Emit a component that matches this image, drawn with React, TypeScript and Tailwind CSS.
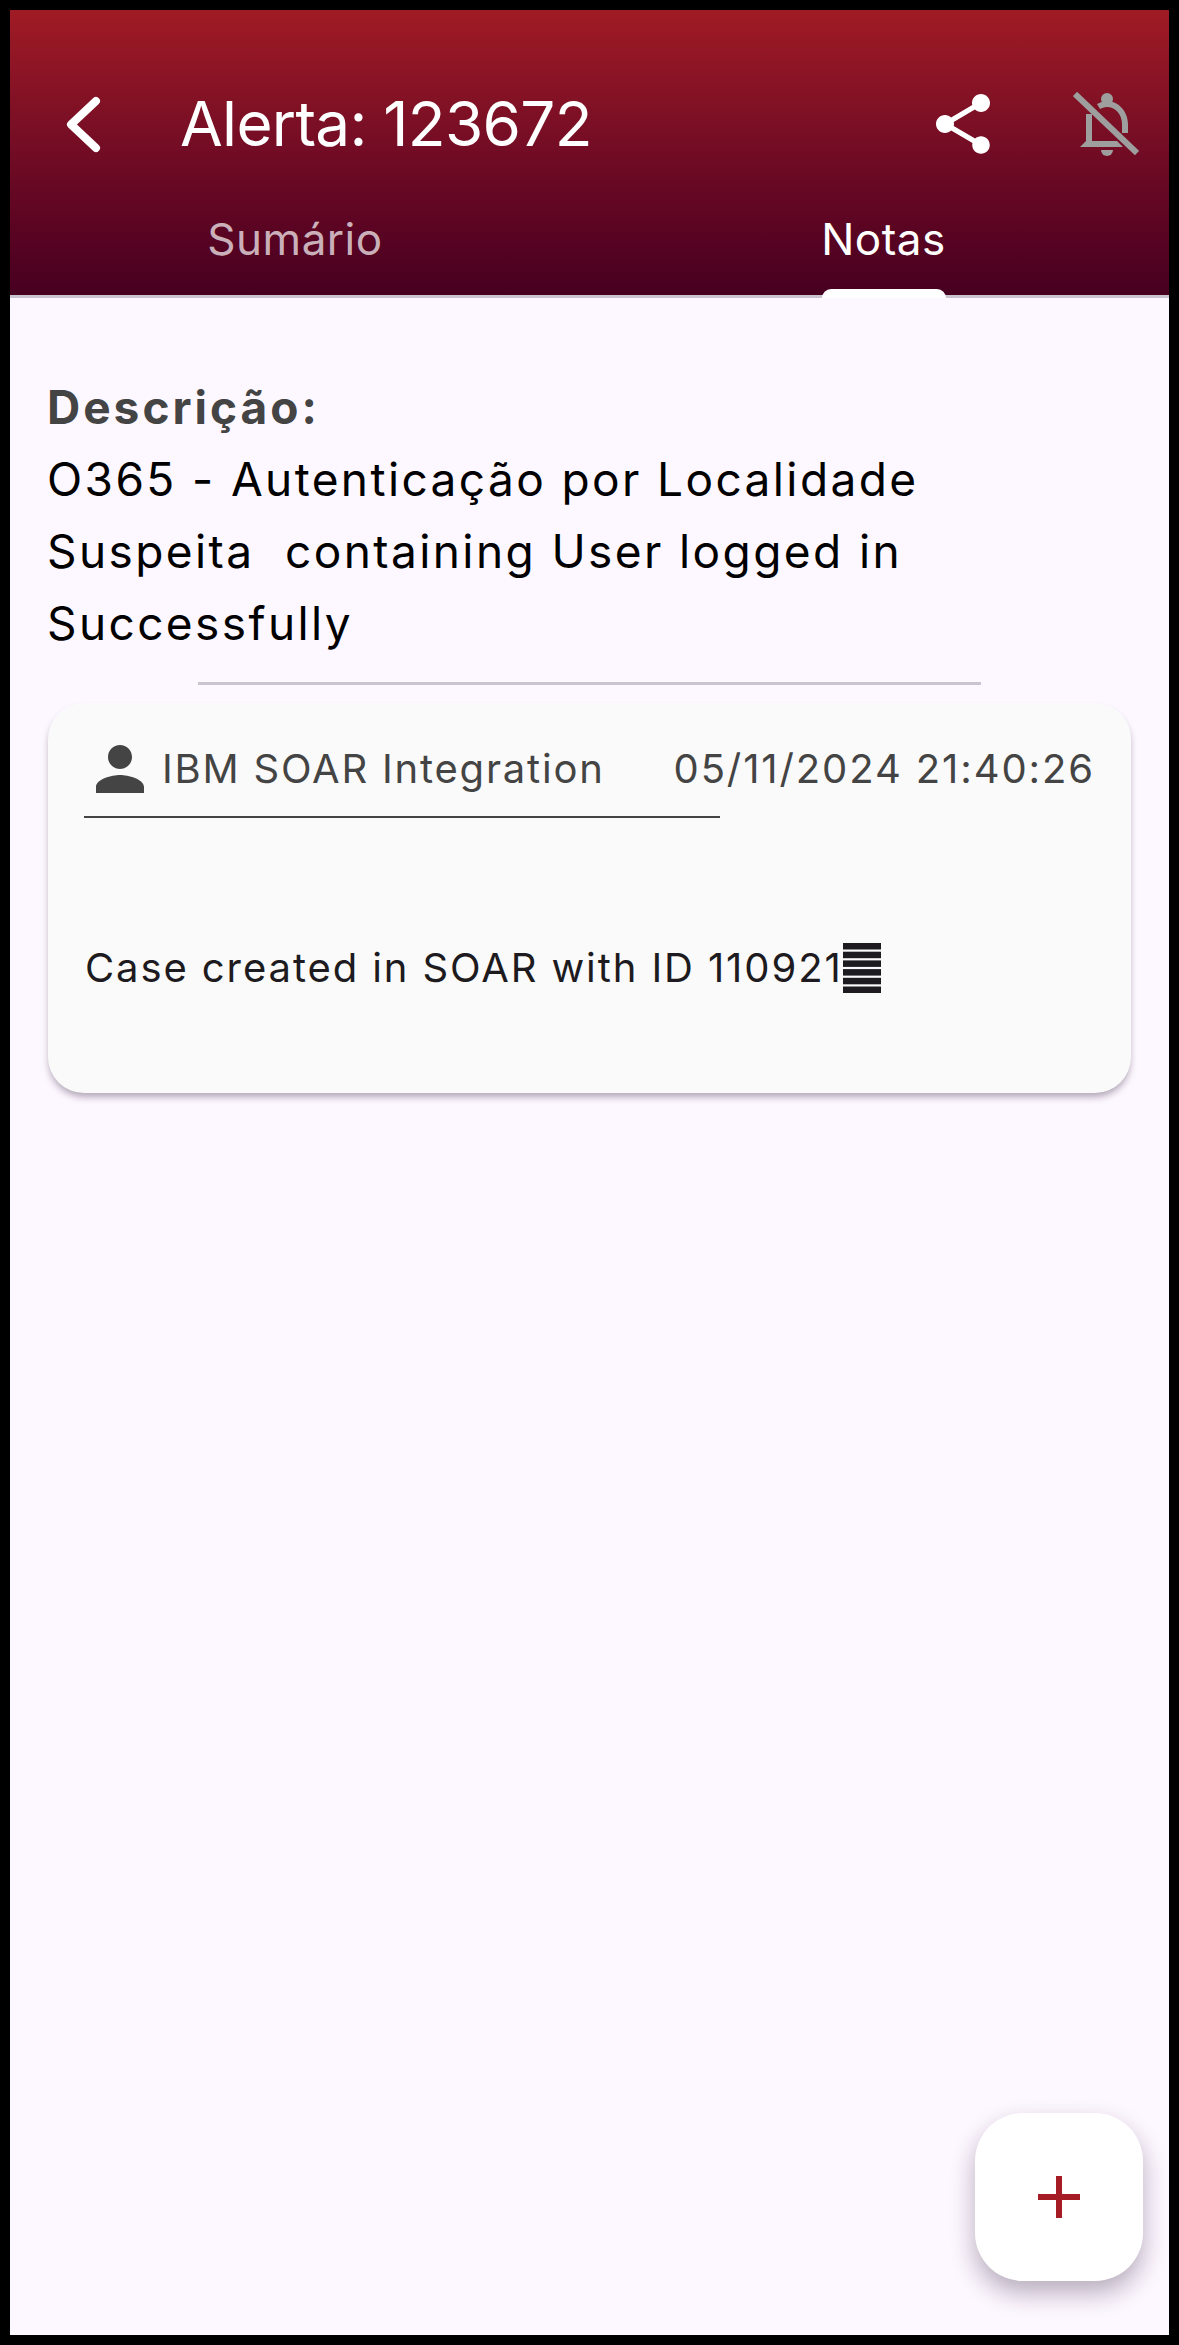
import React from "react";
import { MdShare, MdPerson } from "react-icons/md";

function App() {
    return (
        <div className="h-[2345px] w-[1179px] bg-black p-[10px] font-['Inter','Noto_Sans',sans-serif]">
            <div className="relative flex h-[2325px] w-[1159px] flex-col bg-[#fdf7ff]">
                <header className="flex h-[288px] flex-col border-b-[3px] border-[#cac4d0] bg-gradient-to-b from-[#a01b24] to-[#470020]">
                    <div className="mt-[78px] flex h-[72px] items-center">
                        <svg className="ml-[50px] h-[72px] w-[48px]" viewBox="0 0 48 72" fill="none">
                            <path d="M36 13 L11 36.5 L36 60" stroke="#fff" strokeWidth="8" strokeLinecap="round" strokeLinejoin="round" />
                        </svg>
                        <h1 className="ml-[72px] text-[62px] leading-none font-normal tracking-[-0.7px] text-white">Alerta: 123672</h1>
                        <MdShare className="ml-auto text-white" size={72} />
                        <svg className="mr-[30px] ml-[74px] h-[66px] w-[66px]" viewBox="0 0 66 66" fill="#9e9e9e">
                            <circle cx="34" cy="8" r="6" />
                            <path d="M24 13 C28 11 31 10 34 10 C45 10 55 20 55 33 V42 H49 V33 C49 23 42 16 34 16 C31 16 29 17 27 18 Z" />
                            <path d="M13 23 H19 V50 H13 Z" />
                            <path d="M7 56 L13 50 H44 L50 56 Z" />
                            <path d="M28 59 H40 A6 6 0 0 1 28 59 Z" />
                            <path d="M2 3 L64 62" fill="none" stroke="#9e9e9e" strokeWidth="6" />
                        </svg>
                    </div>
                    <div className="mt-[54px] grid grid-cols-[570px_589px] text-center text-[44px] leading-[50px] tracking-[0.5px]">
                        <div className="text-white/70">Sumário</div>
                        <div className="relative pl-[18px] text-white">
                            Notas
                            <span className="absolute top-[75px] left-[242px] h-[9px] w-[124px] rounded-t-[9px] bg-white" />
                        </div>
                    </div>
                </header>

                <section className="px-[37px] pt-[73px]">
                    <p className="text-[46px] leading-[72px] font-bold tracking-[3px] text-[#444444]">Descrição:</p>
                    <p className="text-[46px] leading-[72px] tracking-[2.4px] whitespace-pre text-black">
                        {"O365 - Autenticação por Localidade\nSuspeita  containing User logged in\nSuccessfully"}
                    </p>
                </section>

                <div className="mx-auto mt-[23px] h-[3px] w-[783px] bg-[#cac4d0]" />

                <div className="mx-[38px] mt-[18px] h-[390px] w-[1083px] rounded-[36px] bg-[#fafafa] shadow-[0_5px_7px_-1px_rgba(40,20,50,0.35)]">
                    <div className="flex h-[114px] items-start">
                        <div className="mt-[30px] mr-[-50px] ml-[36px] h-[85px] w-[636px] shrink-0 border-b-2 border-[#444444]">
                            <div className="flex items-center text-[#444444]">
                                <MdPerson size={72} />
                                <span className="ml-[6px] text-[40px] tracking-[1.8px]">IBM SOAR Integration</span>
                            </div>
                        </div>
                        <span className="mt-[38px] mr-[36px] ml-auto text-[40px] leading-[56px] tracking-[1.9px] whitespace-nowrap text-[#444444]">05/11/2024 21:40:26</span>
                    </div>
                    <div className="mt-[123px] ml-[37px] flex items-center text-[40px] leading-[56px] tracking-[1.9px] text-[#1d1b20]">
                        Case created in SOAR with ID 110921
                        <svg className="h-[50px] w-[38px]" viewBox="0 0 38 50" fill="#1d1b20">
                            <rect y="0" width="38" height="6.5" />
                            <rect y="8.7" width="38" height="6.5" />
                            <rect y="17.4" width="38" height="6.5" />
                            <rect y="26.1" width="38" height="6.5" />
                            <rect y="34.8" width="38" height="6.5" />
                            <rect y="43.5" width="38" height="6.5" />
                        </svg>
                    </div>
                </div>

                <button className="absolute top-[2103px] left-[965px] flex h-[168px] w-[168px] items-center justify-center rounded-[48px] bg-white shadow-[0_12px_24px_rgba(40,20,50,0.32)]">
                    <svg className="h-[42px] w-[42px]" viewBox="0 0 42 42" fill="#a51c24">
                        <rect x="18" y="0" width="6" height="42" />
                        <rect x="0" y="18" width="42" height="6" />
                    </svg>
                </button>
            </div>
        </div>
    );
}

export default App;
